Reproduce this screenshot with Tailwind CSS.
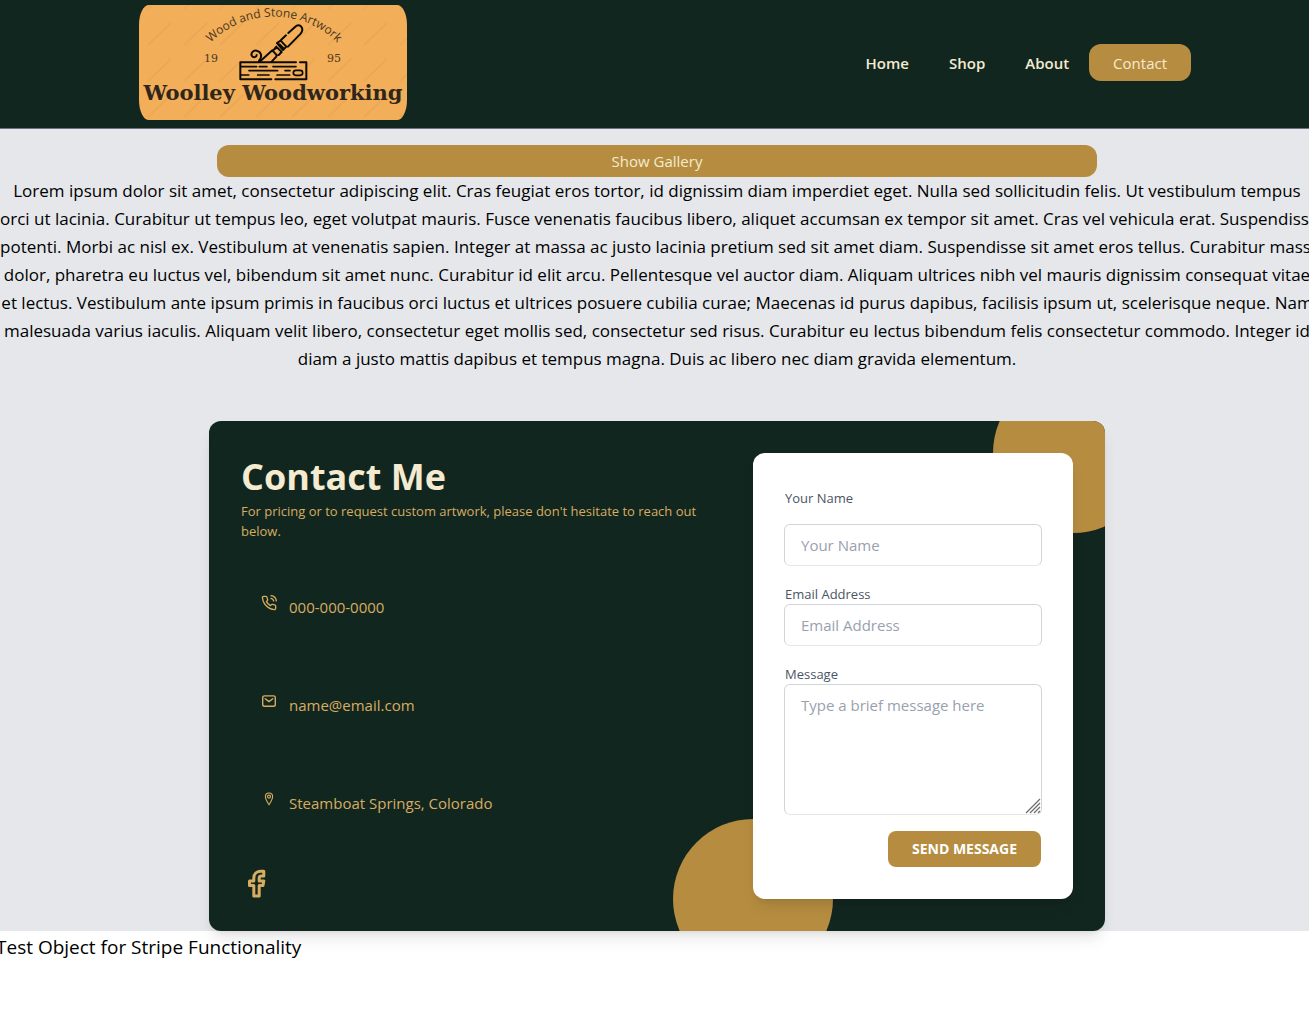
<!DOCTYPE html>
<html lang="en">
<head>
<meta charset="utf-8">
<meta name="viewport" content="width=device-width, initial-scale=1">
<title>Woolley Woodworking</title>
<script src="https://cdn.jsdelivr.net/npm/@tailwindcss/browser@4"></script>
</head>
<body class="overflow-x-hidden bg-white font-['Open_Sans',sans-serif] text-[15px] leading-6 text-black">

<header class="flex items-center justify-between border-b border-gray-500 bg-[#122620] pt-[5px] pr-[118px] pb-2 pl-[139px]">
  <a href="#" aria-label="Woolley Woodworking" class="block w-[268px] overflow-hidden rounded-[10px/20px] bg-[#f2ae58]">
    <svg viewBox="0 0 268 115" class="block w-full">
      <defs>
        <pattern id="marks" width="36" height="36" patternUnits="userSpaceOnUse" x="6" y="16">
          <path d="M3 24 L26 2" stroke="#a0602c" stroke-opacity=".07" stroke-width="2" fill="none"/>
        </pattern>
        <path id="arc" d="M65 45 A90 90 0 0 1 205 45"/>
      </defs>
      <rect width="268" height="115" fill="url(#marks)"/>
      <text fill="#4a3722" font-family="Open Sans, sans-serif" font-size="12" text-anchor="middle"><textPath href="#arc" startOffset="50%">Wood and Stone Artwork</textPath></text>
      <g fill="#4a3722" font-family="DejaVu Serif, serif" font-size="11" text-anchor="middle">
        <text x="72" y="57">19</text>
        <text x="195" y="57">95</text>
      </g>
      <g transform="translate(-9 -5) scale(.33333)" fill="none" stroke="#0c0a06" stroke-width="6" stroke-linecap="round" stroke-linejoin="round">
        <path d="M498 187H331V238H424M436 238H529V187H510"/>
        <path stroke-width="5" d="M333 200H380M388 200H411M429 200H498M357 212H443M465 212H480M333 225H356M383 225H417M441 225H479"/>
        <rect x="490" y="211" width="28" height="15" rx="7.500" stroke-width="5"/>
        <path d="M389 185L427 151L441 166M425 185L439 170V164M430 150L441 142L455 156L446 165M439 140L432 149M441 129L452 122L469 140L459 150ZM453 120L468 106M475 99L495 81C503 73 511 75 515 82C519 89 517 95 512 101L474 140M449 133L461 145"/>
        <path d="M387 183C398 170 394 155 380 152C369 150 361 160 366 168C370 174 380 172 380 165"/>
      </g>
      <text x="134" y="95" fill="#2f261b" font-family="DejaVu Serif, serif" font-size="21" font-weight="700" text-anchor="middle">Woolley Woodworking</text>
    </svg>
  </a>
  <nav class="flex items-center gap-10 font-semibold text-[#f4ebd0]">
    <a href="#">Home</a>
    <a href="#">Shop</a>
    <div class="flex items-center gap-5">
      <a href="#">About</a>
      <button type="button" class="h-[37px] rounded-xl bg-[#b68d40] px-6 font-normal">Contact</button>
    </div>
  </nav>
</header>

<main class="flex w-[calc(100%+5px)] flex-col items-center bg-gray-200 pt-4">
  <button type="button" class="h-8 w-full max-w-[880px] rounded-xl bg-[#b68d40] text-[#f4ebd0]">Show Gallery</button>
  <p class="w-full text-center text-[17px] leading-7 whitespace-nowrap">
    Lorem ipsum dolor sit amet, consectetur adipiscing elit. Cras feugiat eros tortor, id dignissim diam imperdiet eget. Nulla sed sollicitudin felis. Ut vestibulum tempus<br>
    orci ut lacinia. Curabitur ut tempus leo, eget volutpat mauris. Fusce venenatis faucibus libero, aliquet accumsan ex tempor sit amet. Cras vel vehicula erat. Suspendisse<br>
    potenti. Morbi ac nisl ex. Vestibulum at venenatis sapien. Integer at massa ac justo lacinia pretium sed sit amet diam. Suspendisse sit amet eros tellus. Curabitur massa<br>
    dolor, pharetra eu luctus vel, bibendum sit amet nunc. Curabitur id elit arcu. Pellentesque vel auctor diam. Aliquam ultrices nibh vel mauris dignissim consequat vitae<br>
    et lectus. Vestibulum ante ipsum primis in faucibus orci luctus et ultrices posuere cubilia curae; Maecenas id purus dapibus, facilisis ipsum ut, scelerisque neque. Nam<br>
    malesuada varius iaculis. Aliquam velit libero, consectetur eget mollis sed, consectetur sed risus. Curabitur eu lectus bibendum felis consectetur commodo. Integer id<br>
    diam a justo mattis dapibus et tempus magna. Duis ac libero nec diam gravida elementum.
  </p>

  <section class="relative mt-12 flex w-full max-w-4xl gap-8 overflow-hidden rounded-xl bg-[#122620] p-8 text-[#d6ad60] shadow-lg">
    <div class="flex flex-1 flex-col justify-between">
      <div>
        <h1 class="pt-1 text-4xl leading-10 font-bold text-[#f4ebd0]">Contact Me</h1>
        <p class="pt-1 text-[13px] leading-5">For pricing or to request custom artwork, please don't hesitate to reach out below.</p>
      </div>
      <ul class="flex flex-col gap-[74px] pt-px pl-5">
        <li class="flex gap-3">
          <svg class="size-4" viewBox="0 0 24 24" fill="none" stroke="currentColor" stroke-width="2" stroke-linecap="round" stroke-linejoin="round"><path d="M15.05 5A5 5 0 0 1 19 8.95M15.05 1A9 9 0 0 1 23 8.94M22 16.92v3a2 2 0 0 1-2.18 2 19.79 19.79 0 0 1-8.63-3.07 19.5 19.5 0 0 1-6-6A19.79 19.79 0 0 1 2.12 4.18 2 2 0 0 1 4.11 2h3a2 2 0 0 1 2 1.72c.13.96.36 1.9.7 2.81a2 2 0 0 1-.45 2.11L8.09 9.91a16 16 0 0 0 6 6l1.27-1.27a2 2 0 0 1 2.11-.45c.91.34 1.85.57 2.81.7A2 2 0 0 1 22 16.92z"/></svg>
          <span>000-000-0000</span>
        </li>
        <li class="flex gap-3">
          <svg class="size-4" viewBox="0 0 16 16" fill="none" stroke="currentColor" stroke-width="1.4" stroke-linecap="round" stroke-linejoin="round"><rect x="1.700" y="2.900" width="12.600" height="10.400" rx="1.800"/><path d="M4.200 5.700L8 8.600L11.800 5.700"/></svg>
          <span>name@email.com</span>
        </li>
        <li class="flex gap-3">
          <svg class="size-4" viewBox="0 0 16 16" fill="none" stroke="currentColor" stroke-width="1.1" stroke-linecap="round" stroke-linejoin="round"><path d="M8 2C5.900 2 4.400 3.500 4.400 5.600C4.400 8.400 8 13.800 8 13.800S11.600 8.400 11.600 5.600C11.600 3.500 10.100 2 8 2Z"/><circle cx="8" cy="5.600" r="1.500"/></svg>
          <span>Steamboat Springs, Colorado</span>
        </li>
      </ul>
      <a href="#" aria-label="Facebook" class="block size-8">
        <svg class="size-8" viewBox="0 0 32 32" fill="none" stroke="currentColor" stroke-width="3" stroke-linejoin="round"><path d="M22.800 4.200H20C15.600 4.200 12.800 7 12.800 11V14H8.500V18.500H12.800V29H18.200V18.500H22L22.800 14H18.200V11.200C18.200 9.800 19 9 20.400 9H22.800Z"/></svg>
      </a>
    </div>

    <div class="relative w-80">
      <div class="absolute -top-20 -right-20 size-40 rounded-full bg-[#b68d40]"></div>
      <div class="absolute -bottom-20 -left-20 size-40 rounded-full bg-[#b68d40]"></div>
      <form class="relative flex flex-col rounded-xl bg-white px-[31px] pt-[35px] pb-8 text-gray-600 shadow-lg">
        <label for="name" class="px-px text-[13px] leading-5">Your Name</label>
        <input id="name" type="text" placeholder="Your Name" class="mt-4 h-[42px] w-full rounded-md border border-gray-300 border-b-gray-200 px-4 placeholder:text-gray-400">
        <label for="email" class="mt-[18px] px-px text-[13px] leading-5">Email Address</label>
        <input id="email" type="email" placeholder="Email Address" class="h-[42px] w-full rounded-md border border-gray-300 border-b-gray-200 px-4 placeholder:text-gray-400">
        <label for="message" class="mt-[18px] px-px text-[13px] leading-5">Message</label>
        <div class="relative flex">
          <textarea id="message" placeholder="Type a brief message here" class="h-[131px] w-full resize-none rounded-md border border-gray-300 border-b-gray-200 px-4 py-2 placeholder:text-gray-400"></textarea>
          <svg class="pointer-events-none absolute right-px bottom-px size-4" viewBox="0 0 16 16" stroke="#6f6f6f" stroke-width="1.3"><path d="M1 15L15 1M5 15L15 5M9 15L15 9M13 15L15 13"/></svg>
        </div>
        <button type="submit" class="mt-4 mr-px h-9 self-end rounded-lg bg-[#b68d40] px-6 text-sm font-bold text-white uppercase">Send Message</button>
      </form>
    </div>
  </section>
</main>

<p class="-ml-1 text-[19px] leading-8">Test Object for Stripe Functionality</p>

</body>
</html>
